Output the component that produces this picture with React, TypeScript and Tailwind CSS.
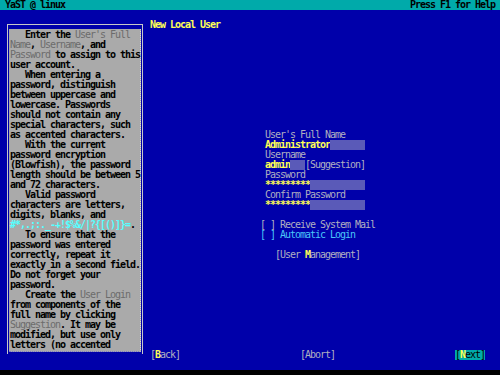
import React from "react";

const mono = "font-['DejaVu_Sans_Mono','Liberation_Mono',monospace] text-[10px] leading-[10px] tracking-[-1.02px]";

// help text lines; [text, kind] where kind: n = normal, h = highlighted name, c = cyan chars
type Seg = [string, "n" | "h" | "c"];
const help: Seg[][] = [
  [["   Enter the ", "n"], ["User's Full", "h"]],
  [["Name", "h"], [", ", "n"], ["Username", "h"], [", and", "n"]],
  [["Password", "h"], [" to assign to this", "n"]],
  [["user account.", "n"]],
  [["   When entering a", "n"]],
  [["password, distinguish", "n"]],
  [["between uppercase and", "n"]],
  [["lowercase. Passwords", "n"]],
  [["should not contain any", "n"]],
  [["special characters, such", "n"]],
  [["as accented characters.", "n"]],
  [["   With the current", "n"]],
  [["password encryption", "n"]],
  [["(Blowfish), the password", "n"]],
  [["length should be between 5", "n"]],
  [["and 72 characters.", "n"]],
  [["   Valid password", "n"]],
  [["characters are letters,", "n"]],
  [["digits, blanks, and", "n"]],
  [["#*,.;:._-+!$%&/|?{[()]}=", "c"], [".", "n"]],
  [["   To ensure that the", "n"]],
  [["password was entered", "n"]],
  [["correctly, repeat it", "n"]],
  [["exactly in a second field.", "n"]],
  [["Do not forget your", "n"]],
  [["password.", "n"]],
  [["   Create the ", "n"], ["User Login", "h"]],
  [["from components of the", "n"]],
  [["full name by clicking", "n"]],
  [["Suggestion", "h"], [". It may be", "n"]],
  [["modified, but use only", "n"]],
  [["letters (no accented", "n"]],
];

const segClass = {
  n: "text-black font-bold",
  h: "text-[#6c6c6c]",
  c: "text-[#55ffff] font-bold",
};

function Field({ w }: { w: string }) {
  return <span className={`inline-block h-[10px] bg-[#5a5ab8] ${w}`} />;
}

export default function App() {
  return (
    <div className={`w-[500px] h-[375px] bg-black flex flex-col overflow-hidden whitespace-pre ${mono}`}>
      {/* title bar */}
      <div className="h-[10px] bg-[#00aaaa] flex justify-between px-[5px] text-black font-bold">
        <span>YaST @ linux</span>
        <span>Press F1 for Help</span>
      </div>

      <div className="h-[360px] bg-[#0000aa] flex">
        {/* help panel */}
        <div className="w-[150px] shrink-0">
          <div className="ml-[7px] mt-[14px] w-[136px] border-x border-t border-[#c8c8c8] px-[1px] pt-[4px] pb-[2px]">
            <div className="bg-[#aaaaaa] pl-[1px] pt-[1px] h-[323px] border-r border-b border-r-[#d8d8d8] border-b-[#7a7ac8] border-dotted">
              {help.map((line, i) => (
                <div key={i} className="h-[10px]">
                  {line.map(([t, k], j) => (
                    <span key={j} className={segClass[k]}>{t}</span>
                  ))}
                </div>
              ))}
            </div>
          </div>
        </div>

        {/* dialog */}
        <div className="flex-1 flex flex-col">
          <div className="mt-[10px] h-[10px] text-[#ffff55] font-bold">New Local User</div>

          <div className="mt-[100px] ml-[110px] flex flex-col">
            <div className="ml-[5px] text-[#b0b0c0]">User's Full Name</div>
            <div className="ml-[5px] flex">
              <span className="text-[#ffff55] font-bold">Administrator</span>
              <Field w="w-[35px]" />
            </div>
            <div className="ml-[5px] text-[#b0b0c0]">Username</div>
            <div className="ml-[5px] flex">
              <span className="text-[#ffff55] font-bold">admin</span>
              <Field w="w-[15px]" />
              <span className="text-[#b0b0c0]">[Suggestion]</span>
            </div>
            <div className="ml-[5px] text-[#b0b0c0]">Password</div>
            <div className="ml-[5px] flex">
              <span className="text-[#ffff55] font-bold">*********</span>
              <Field w="w-[55px]" />
            </div>
            <div className="ml-[5px] text-[#b0b0c0]">Confirm Password</div>
            <div className="ml-[5px] flex">
              <span className="text-[#ffff55] font-bold">*********</span>
              <Field w="w-[55px]" />
            </div>

            <div className="mt-[10px] text-[#b0b0c0]">[ ] Receive System Mail</div>
            <div className="text-[#4ac6f8]">[ ] Automatic Login</div>

            <div className="mt-[10px] ml-[15px] text-[#b0b0c0]">
              [User <span className="text-[#ffff55] font-bold">M</span>anagement]
            </div>
          </div>

          <div className="mt-auto mb-[10px] pr-[15px] flex justify-between text-[#b0b0c0]">
            <span>
              [<span className="text-[#ffff55] font-bold">B</span>ack]
            </span>
            <span>[Abort]</span>
            <span className="bg-[#00aaaa] text-black">
              [<span className="text-[#ffff55] font-bold">N</span>ext]
            </span>
          </div>
        </div>
      </div>
    </div>
  );
}
